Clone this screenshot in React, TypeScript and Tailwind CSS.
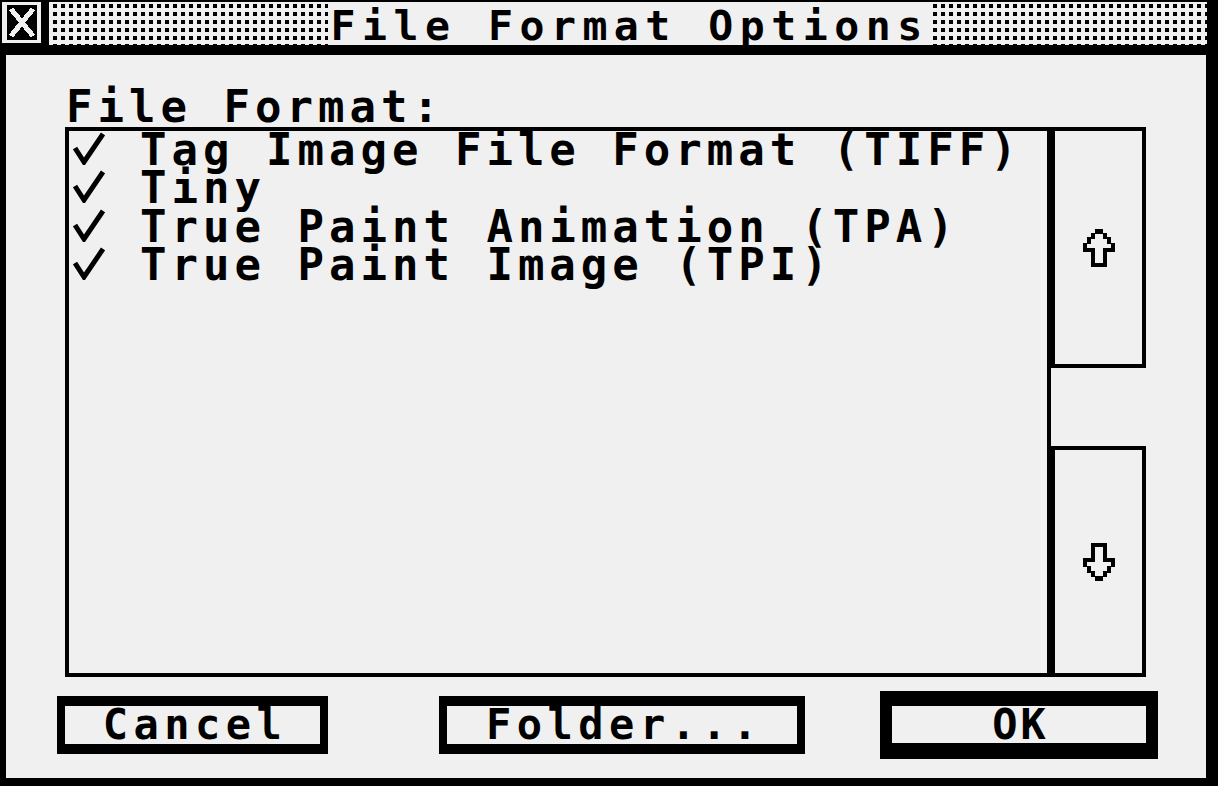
import React from 'react';

const LIGHT = '#f0f0f0';

const CloseIcon = () => (
  <svg width="30" height="35" viewBox="0 0 30 35" shapeRendering="crispEdges">
    <rect x="0" y="0" width="30" height="35" fill="#000" />
    <path d="M4 4 L26 31 M26 4 L4 31" stroke={LIGHT} strokeWidth="5" />
  </svg>
);

const Check = () => (
  <svg width="32" height="33" viewBox="0 0 32 33" className="mt-[1px] ml-[4px] shrink-0">
    <polyline points="2,16 11,30 30,2" fill="none" stroke="#000" strokeWidth="5" />
  </svg>
);

const Arrow = ({ down = false }: { down?: boolean }) => (
  <svg
    width="32"
    height="38"
    viewBox="0 0 32 38"
    shapeRendering="crispEdges"
    className={down ? 'rotate-180' : ''}
  >
    <path
      d="M12 0 H20 V4 H24 V8 H28 V14 H32 V23 H24 V38 H8 V23 H0 V14 H4 V8 H8 V4 H12 Z"
      fill="#000"
    />
    <path d="M12 5 H20 V10 H24 V15 H28 V19 H20 V34 H12 V19 H4 V15 H8 V10 H12 Z" fill={LIGHT} />
  </svg>
);

const formatos = [
  'Tag Image File Format (TIFF)',
  'Tiny',
  'True Paint Animation (TPA)',
  'True Paint Image (TPI)',
];

export default function App() {
  return (
    <div className="w-[1218px] h-[786px] bg-black flex flex-col font-['DejaVu_Sans_Mono',monospace] font-bold text-black select-none">
      {/* barra de título */}
      <div className="h-[55px] shrink-0 flex items-start pt-[2px] pl-[2px] pr-[11px]">
        <div className="w-[39px] h-[41px] bg-[#f0f0f0] flex items-center justify-center">
          <CloseIcon />
        </div>
        <div className="ml-[8px] flex-1 h-[43px] bg-[#f0f0f0] bg-[image:conic-gradient(from_270deg_at_4px_4px,#000_25%,#f0f0f0_0)] bg-[length:8px_8px] bg-[position:4px_2px] flex justify-center">
          <div className="w-[601px] h-full bg-[#f0f0f0] pl-[3px] text-[41.5px] leading-[47px] tracking-[6.5px] whitespace-nowrap">
            File Format Options
          </div>
        </div>
      </div>

      {/* conteúdo */}
      <div className="flex-1 ml-[6px] mr-[12px] mb-[8px] bg-[#f0f0f0] flex flex-col">
        <div className="mt-[34px] ml-[60px] text-[44px] leading-[36px] tracking-[5px] whitespace-nowrap">
          File Format:
        </div>

        <div className="mt-[2px] ml-[59px] flex h-[550px]">
          <div className="w-[986px] h-full border-4 border-black flex flex-col">
            {formatos.map((f) => (
              <div key={f} className="flex items-start h-[38.4px]">
                <Check />
                <span className="ml-[35px] text-[44px] leading-[38.4px] tracking-[5px] whitespace-nowrap">
                  {f}
                </span>
              </div>
            ))}
          </div>
          <div className="w-[95px] h-full flex flex-col justify-between">
            <div className="h-[241px] border-4 border-black flex items-center justify-center">
              <Arrow />
            </div>
            <div className="h-[231px] border-4 border-black flex items-center justify-center">
              <Arrow down />
            </div>
          </div>
        </div>

        <div className="mt-[14px] h-[68px] flex items-center">
          <div className="ml-[51px] w-[271px] h-[58px] border-x-[8px] border-y-[10px] border-black flex items-center justify-center pl-[5px] text-[42px] leading-[38px] tracking-[5.5px] whitespace-nowrap">
            Cancel
          </div>
          <div className="ml-[111px] w-[366px] h-[58px] border-x-[8px] border-y-[10px] border-black flex items-center justify-center pl-[5px] text-[42px] leading-[38px] tracking-[5.5px] whitespace-nowrap">
            Folder...
          </div>
          <div className="ml-[75px] w-[278px] h-[68px] border-x-[12px] border-t-[15px] border-b-[16px] border-black flex items-center justify-center pl-[3px] text-[42px] leading-[37px] tracking-[3px] whitespace-nowrap">
            OK
          </div>
        </div>
      </div>
    </div>
  );
}
